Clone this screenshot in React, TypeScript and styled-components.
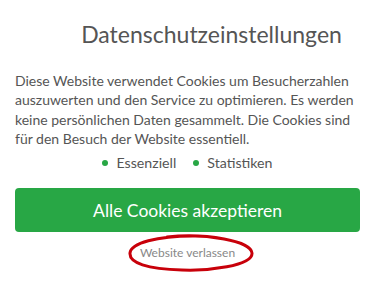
import React from 'react';
import styled, { createGlobalStyle } from 'styled-components';

const GlobalStyle = createGlobalStyle`
  body {
    margin: 0;
    background: #fff;
    font-family: Lato, "Open Sans", sans-serif;
  }
`;

const Modal = styled.div`
  width: 375px;
  height: 284px;
  box-sizing: border-box;
  padding: 17px 15px 0;
  display: flex;
  flex-direction: column;
  align-items: stretch;
`;

const Title = styled.h4`
  margin: 0 0 20px;
  padding-left: 48px;
  text-align: center;
  font-size: 23px;
  font-weight: 400;
  line-height: 34px;
  color: #555;
`;

const Text = styled.p`
  margin: 0;
  font-size: 14px;
  line-height: 19.3px;
  color: #555;
`;

const Categories = styled.ul`
  list-style: none;
  margin: 5px 0 0;
  padding: 0;
  display: flex;
  justify-content: center;
  gap: 17px;
`;

const Category = styled.li`
  display: flex;
  align-items: center;
  gap: 8px;
  font-size: 14.2px;
  line-height: 20px;
  color: #555;
  &::before {
    content: '';
    width: 6px;
    height: 6px;
    border-radius: 50%;
    background: #28a745;
  }
`;

const AcceptButton = styled.button`
  margin-top: 15px;
  height: 44px;
  border: none;
  border-radius: 4px;
  background: #28a745;
  color: #fff;
  font-family: Lato, sans-serif;
  font-size: 17.5px;
  cursor: pointer;
`;

const LeaveWrap = styled.div`
  position: relative;
  align-self: center;
  margin-top: 12px;
  line-height: 14px;
`;

const LeaveLink = styled.a`
  font-size: 12px;
  line-height: 14px;
  color: #888;
  text-decoration: none;
`;

const Circle = styled.svg`
  position: absolute;
  left: -13px;
  top: -11px;
  pointer-events: none;
`;

export default function App() {
  return (
    <>
      <GlobalStyle />
      <Modal>
        <Title>Datenschutzeinstellungen</Title>
        <Text>
          Diese Website verwendet Cookies um Besucherzahlen auszuwerten und den Service zu optimieren.
          Es werden keine persönlichen Daten gesammelt. Die Cookies sind für den Besuch der Website essentiell.
        </Text>
        <Categories>
          <Category>Essenziell</Category>
          <Category>Statistiken</Category>
        </Categories>
        <AcceptButton>Alle Cookies akzeptieren</AcceptButton>
        <LeaveWrap>
          <LeaveLink href="#">Website verlassen</LeaveLink>
          <Circle width="128" height="40" viewBox="0 0 128 40">
            <path
              d="M40 4 C 80 0, 124 8, 125 20 C 126 33, 80 38, 55 37 C 20 36, 2 30, 3 20 C 4 10, 30 3, 66 3"
              fill="none"
              stroke="#c8000a"
              strokeWidth="3"
              strokeLinecap="round"
            />
          </Circle>
        </LeaveWrap>
      </Modal>
    </>
  );
}
